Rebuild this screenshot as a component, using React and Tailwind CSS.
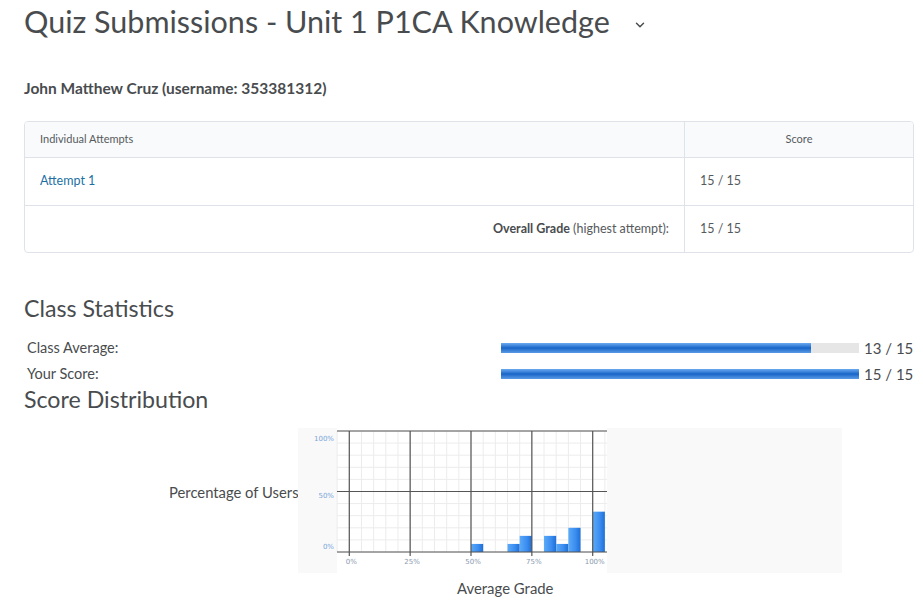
import { ChevronDown } from 'lucide-react';

// score distribution bins: [bin start %, share of users %]
const bins = [
  [50, 6.67], [65, 6.67], [70, 13.33], [80, 13.33], [85, 6.67], [90, 20], [100, 33.33],
];

function DistributionChart() {
  const x0 = 51.3;
  const xs = 2.434;
  const y0 = 124;
  const ys = 1.21;
  const X = (p) => x0 + p * xs;
  const Y = (p) => y0 - p * ys;

  const minorV = [];
  for (let p = -5; p <= 105; p += 5) minorV.push(X(p));
  const minorH = [];
  for (let p = 0; p <= 100; p += 10) minorH.push(Y(p));

  return (
    <svg width="544" height="145" viewBox="0 0 544 145" className="block shrink-0">
      <defs>
        <linearGradient id="barFill" x1="0" x2="1" y1="0" y2="0">
          <stop offset="0" stopColor="#5aaaf7" />
          <stop offset="0.6" stopColor="#3a8cf0" />
          <stop offset="1" stopColor="#1f6fd6" />
        </linearGradient>
      </defs>
      <rect x="0" y="0" width="544" height="145" fill="#f9f9f9" />
      <rect x="39" y="0" width="270" height="145" fill="#ffffff" />
      {minorV.filter((x) => x >= 39 && x <= 309).map((x, i) => (
        <line key={'v' + i} x1={x} x2={x} y1="3" y2="124" stroke="#ececec" strokeWidth="1" />
      ))}
      {minorH.map((y, i) => (
        <line key={'h' + i} x1="39" x2="309" y1={y} y2={y} stroke="#ececec" strokeWidth="1" />
      ))}
      {bins.map(([p, v]) => (
        <rect key={p} x={X(p)} y={Y(v)} width={5 * xs} height={v * ys} fill="url(#barFill)" />
      ))}
      {[0, 50, 100].map((p) => (
        <line key={'H' + p} x1="39" x2="309" y1={Y(p)} y2={Y(p)} stroke="#555" strokeWidth="1.2" />
      ))}
      {[0, 25, 50, 75, 100].map((p) => (
        <line key={'V' + p} x1={X(p)} x2={X(p)} y1="3" y2="128" stroke="#555" strokeWidth="1.2" />
      ))}
      {[[100, 13], [50, 70], [0, 121]].map(([p, y]) => (
        <text key={'yl' + p} x="36" y={y} textAnchor="end" fontSize="7" fill="#7aa6da" fontFamily="Verdana, 'DejaVu Sans', sans-serif">{p}%</text>
      ))}
      {[0, 25, 50, 75, 100].map((p) => (
        <text key={'xl' + p} x={X(p) + 2} y="136" textAnchor="middle" fontSize="7" fill="#8a9ab0" fontFamily="Verdana, 'DejaVu Sans', sans-serif">{p}%</text>
      ))}
    </svg>
  );
}

function StatBar({ label, value, total }) {
  const pct = (value / total) * 100;
  return (
    <div className="flex items-center h-[26px] whitespace-nowrap">
      <div className="w-[477px] shrink-0 pl-[3px] text-[14.5px] text-[#494c4e]">{label}</div>
      <div className="w-[358px] shrink-0 h-[10px] bg-[#e6e6e6]">
        <div
          className="h-full bg-linear-to-b from-[#6aaaf0] via-[#1565c8] to-[#5a9be6]"
          style={{ width: pct + '%' }}
        />
      </div>
      <div className="pl-[5px] text-[15px] text-[#494c4e]">{value} / {total}</div>
    </div>
  );
}

export default function App() {
  return (
    <div className="w-[923px] h-[600px] overflow-hidden bg-white px-6 font-['Lato','Liberation_Sans',sans-serif] text-[#494c4e]">
      <h1 className="flex items-center pt-[3px] text-[30.5px] leading-[36px] font-normal whitespace-nowrap">
        Quiz Submissions - Unit 1 P1CA Knowledge
        <ChevronDown size={14} strokeWidth={2.5} className="ml-[23px] mt-[8px] text-[#494c4e]" />
      </h1>

      <div className="mt-[40px] text-[15.5px] font-bold leading-[18px]">
        John Matthew Cruz (username: 353381312)
      </div>

      <div className="mt-[24px] w-[890px] border border-[#dfe3e9] rounded-[4px] overflow-hidden">
        <div className="flex h-[36px] bg-[#f9fafc] border-b border-[#dfe3e9] text-[11px] text-[#565a5c]">
          <div className="w-[660px] flex items-center pl-[15px] border-r border-[#dfe3e9]">Individual Attempts</div>
          <div className="flex-1 flex items-center justify-center">Score</div>
        </div>
        <div className="flex h-[48px] border-b border-[#dfe3e9] text-[12.5px]">
          <div className="w-[660px] flex items-center pl-[15px] border-r border-[#dfe3e9] text-[#1c6fa3]">Attempt 1</div>
          <div className="flex-1 flex items-center pl-[15px] text-[#565a5c]">15 / 15</div>
        </div>
        <div className="flex h-[46px] text-[12.5px]">
          <div className="w-[660px] flex items-center justify-end pr-[15px] border-r border-[#dfe3e9] text-[#565a5c]">
            <span className="font-bold text-[#494c4e]">Overall Grade</span>&nbsp;(highest attempt):
          </div>
          <div className="flex-1 flex items-center pl-[15px] text-[#565a5c]">15 / 15</div>
        </div>
      </div>

      <h2 className="mt-[41px] text-[23.2px] leading-[28px] font-normal">Class Statistics</h2>
      <div className="mt-[13px]">
        <StatBar label="Class Average:" value={13} total={15} />
        <StatBar label="Your Score:" value={15} total={15} />
      </div>
      <h2 className="text-[23.2px] leading-[24px] font-normal">Score Distribution</h2>

      <div className="mt-[17px] flex">
        <div className="w-[274px] shrink-0 pl-[145px] pt-[53px] text-[14.8px] text-[#494c4e] whitespace-nowrap">Percentage of Users</div>
        <DistributionChart />
      </div>
      <div className="mt-[4px] pl-[433px] text-[14.9px] text-[#494c4e]">Average Grade</div>
    </div>
  );
}
